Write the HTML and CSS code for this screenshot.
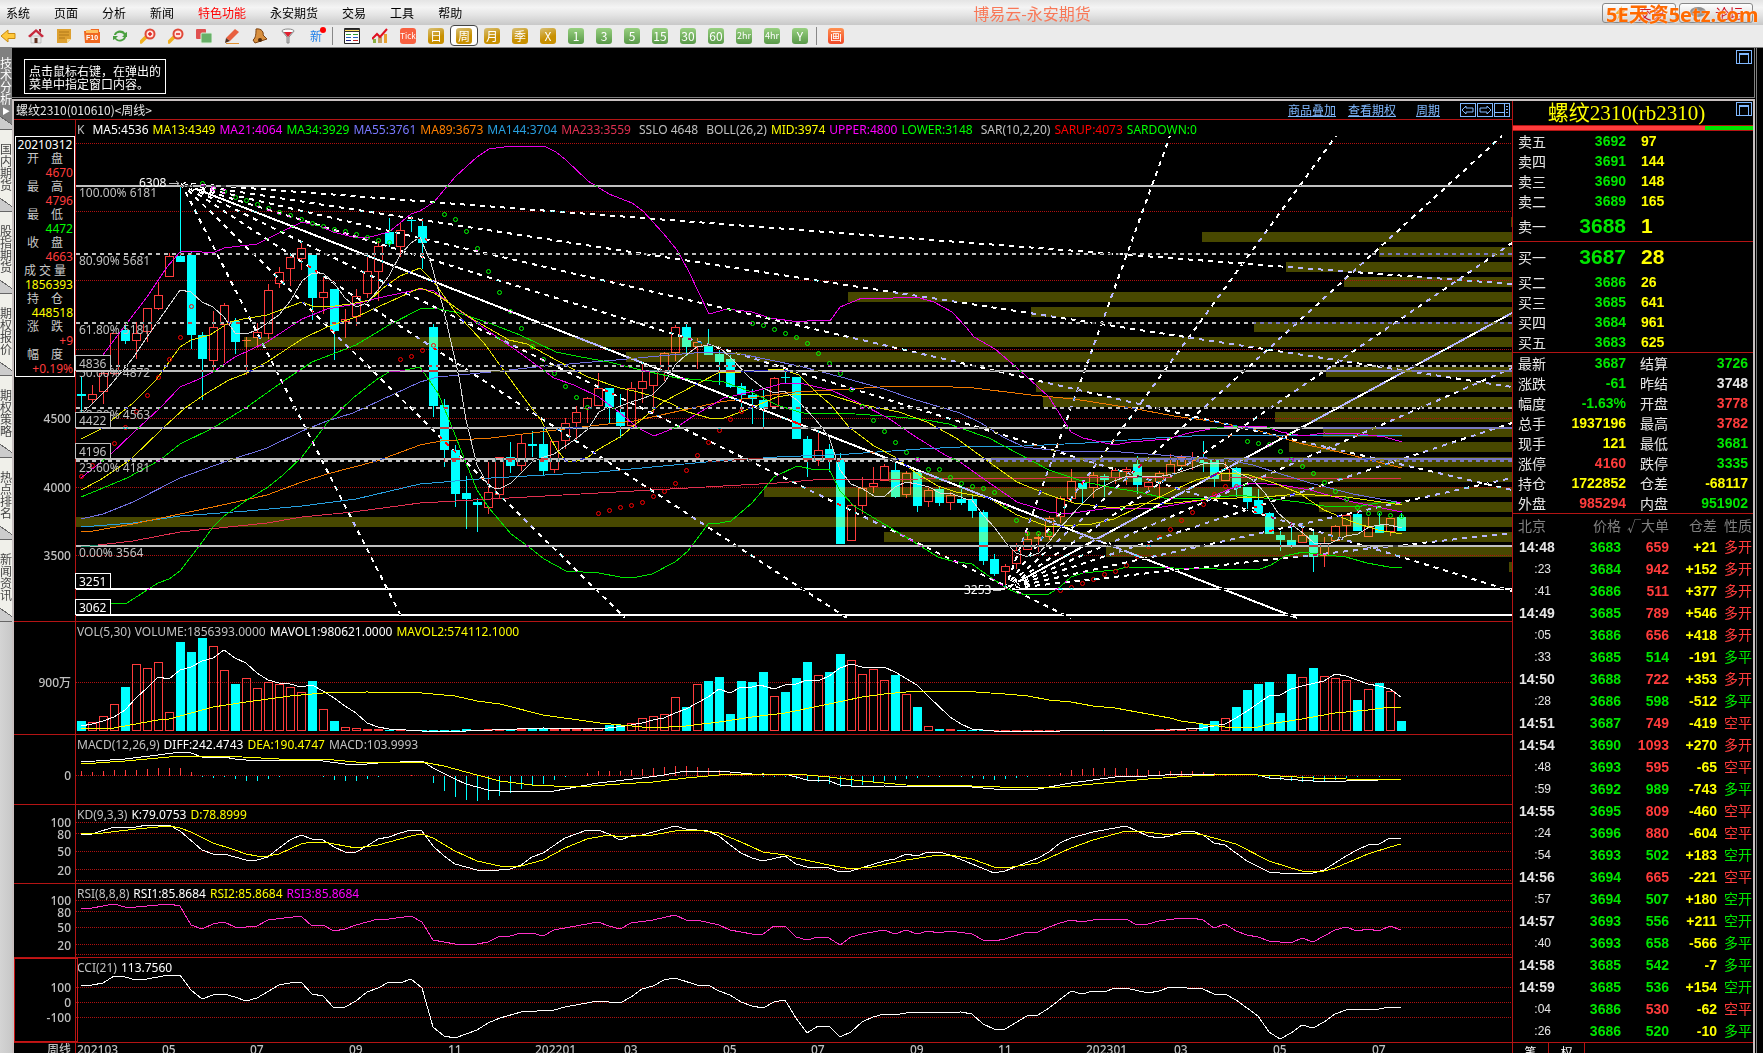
FILE: index.html
```html
<!DOCTYPE html>
<html lang="zh-CN">

<head>
    <meta charset="UTF-8">
    <meta name="viewport" content="width=device-width, initial-scale=1.0">
    <title>博易云-永安期货</title>
    <link rel="stylesheet" href="styles.css">
</head>

<body>
    <header class="menubar">
        <nav class="menu">
            <a href="#">系统</a>
            <a href="#">页面</a>
            <a href="#">分析</a>
            <a href="#">新闻</a>
            <a href="#" class="hot">特色功能</a>
            <a href="#">永安期货</a>
            <a href="#">交易</a>
            <a href="#">工具</a>
            <a href="#">帮助</a>
        </nav>
        <h1 class="app-title">博易云-永安期货</h1>
        <div class="account">
            <button class="pill"><svg width="16" height="16" viewBox="0 0 16 16"><path d="M10 1 3 9h4l-2 6 8-9H9z" fill="#f5a623"/></svg>交易</button>
            <button class="pill"><svg width="18" height="14" viewBox="0 0 18 14"><ellipse cx="9" cy="6" rx="8" ry="5" fill="#8f8f8f"/><path d="M5 9l-1 5 5-4z" fill="#8f8f8f"/></svg>论坛</button>
            <span class="watermark">5E天资5etz.com</span>
        </div>
    </header>

    <div class="toolbar">
        <button class="tool" aria-label="后退"><svg viewBox="0 0 16 16"><path d="M1 8l7-6v3.500h7v5H8V14z" fill="#ffc83c" stroke="#c98a10"/></svg></button>
        <button class="tool" aria-label="首页"><svg viewBox="0 0 16 16"><path d="M3 8h10v7H3z" fill="#e8e8e8" stroke="#999" stroke-width=".5"/><path d="M0 8l8-7 8 7-2 1.500L8 4 2 9.500z" fill="#c8283c"/><path d="M6.500 10h3v5h-3z" fill="#603020"/><path d="M11 1h2v4l-2-2z" fill="#a02030"/></svg></button>
        <button class="tool" aria-label="便签"><svg viewBox="0 0 16 16"><path d="M1 1h14v10l-4 4H1z" fill="#dda030"/><path d="M11 15v-4h4z" fill="#f5d890"/><path d="M3 4h10M3 7h10M3 10h6" stroke="#b07818"/></svg></button>
        <button class="tool" aria-label="F10资料"><svg viewBox="0 0 16 16"><path d="M0 3h6l1-2h8v3h1v11H1z" fill="#f06820"/><path d="M2 2h12v3H2z" fill="#ffc060"/><text x="8" y="12" text-anchor="middle" class="f10">F10</text></svg></button>
        <button class="tool" aria-label="刷新"><svg viewBox="0 0 16 16"><path d="M2 7c1-5 9-6 11-2l2-1v5h-5l2-2C10 4 5 4 4 7zM14 9c-1 5-9 6-11 2l-2 1V8h5l-2 2c2 3 7 2 8-1z" fill="#4aa040"/></svg></button>
        <button class="tool" aria-label="放大"><svg viewBox="0 0 16 16"><path d="M6 9l-5 5" stroke="#f0b020" stroke-width="3.500" stroke-linecap="round"/><circle cx="10" cy="6" r="4.500" fill="#ffe4e0" stroke="#e04838" stroke-width="2"/><path d="M8 6h4M10 4v4" stroke="#e02020" stroke-width="1.500"/></svg></button>
        <button class="tool" aria-label="缩小"><svg viewBox="0 0 16 16"><path d="M6 9l-5 5" stroke="#f0b020" stroke-width="3.500" stroke-linecap="round"/><circle cx="10" cy="6" r="4.500" fill="#ffe4e0" stroke="#e04838" stroke-width="2"/><path d="M8 6h4" stroke="#e02020" stroke-width="1.500"/></svg></button>
        <button class="tool" aria-label="叠加"><svg viewBox="0 0 16 16"><rect x="0" y="1" width="10" height="10" rx="1" fill="#e05050"/><rect x="5" y="5" width="11" height="10" rx="1" fill="#68b068" stroke="#d8f0d8"/></svg></button>
        <button class="tool" aria-label="画线"><svg viewBox="0 0 16 16"><path d="M2 10l9-9 4 3-9 9z" fill="#e86040"/><path d="M2 10l4 3-5 2z" fill="#503020"/><path d="M2 15.500h13" stroke="#e09030"/></svg></button>
        <button class="tool" aria-label="预警"><svg viewBox="0 0 16 16"><path d="M4 1c6-1 8 4 7 6l4 4-12 4-2-3c3-2 3-7 3-11z" fill="#d89040" stroke="#7a4010"/><circle cx="8" cy="12" r="2" fill="#502808"/></svg></button>
        <button class="tool" aria-label="筛选"><svg viewBox="0 0 16 16"><path d="M2 3l5 6v6h2V9l5-6z" fill="#c8c8c8" stroke="#888"/><ellipse cx="8" cy="3" rx="6" ry="2" fill="#fff" stroke="#888"/><path d="M4 4h8L8 9z" fill="#e02030"/></svg></button>
        <button class="tool tool-new">新</button>
        <i class="sep"></i>
        <button class="tool" aria-label="报价表"><svg viewBox="0 0 16 16"><path d="M.500.500h15v15H.500z" fill="#fff" stroke="#222"/><path d="M0 1h16v3H0z" fill="#333"/><path d="M1 2.500h14" stroke="#ffe060"/><path d="M2 6.500h5M9 6.500h5" stroke="#30a030"/><path d="M2 9.500h5M9 9.500h5" stroke="#2060c0"/><path d="M2 12.500h5" stroke="#202080"/><path d="M9 12.500h5" stroke="#c02020"/></svg></button>
        <button class="tool" aria-label="走势"><svg viewBox="0 0 16 16"><path d="M1 11h3v4H1z" fill="#8ab040"/><path d="M6 9h4v6H6z" fill="#c8a060"/><path d="M12 6h3v9h-3z" fill="#e8a030"/><path d="M0 11l5-5 3 3 7-8" fill="none" stroke="#e01020" stroke-width="2"/></svg></button>
        <button class="tool"><b class="chip tick">Tick</b></button>
        <button class="tool"><b class="chip gold">日</b></button>
        <button class="tool selected"><b class="chip gold">周</b></button>
        <button class="tool"><b class="chip gold">月</b></button>
        <button class="tool"><b class="chip gold">季</b></button>
        <button class="tool"><b class="chip gold">X</b></button>
        <button class="tool"><b class="chip green">1</b></button>
        <button class="tool"><b class="chip green">3</b></button>
        <button class="tool"><b class="chip green">5</b></button>
        <button class="tool"><b class="chip green">15</b></button>
        <button class="tool"><b class="chip green">30</b></button>
        <button class="tool"><b class="chip green">60</b></button>
        <button class="tool"><b class="chip green small">2hr</b></button>
        <button class="tool"><b class="chip green small">4hr</b></button>
        <button class="tool"><b class="chip green">Y</b></button>
        <i class="sep"></i>
        <button class="tool"><b class="chip orange">画</b></button>
    </div>

    <main class="workspace">
        <nav class="side-tabs">
            <a href="#" class="side-tab current">技术分析<span>▶</span></a>
            <a href="#" class="side-tab">国内期货</a>
            <a href="#" class="side-tab">股指期货</a>
            <a href="#" class="side-tab">期权报价</a>
            <a href="#" class="side-tab">期权策略</a>
            <a href="#" class="side-tab">热点排名</a>
            <a href="#" class="side-tab">新闻资讯</a>
        </nav>

        <div class="stage">
            <section class="top-pane">
                <p class="hint">点击鼠标右键，在弹出的<br>菜单中指定窗口内容。</p>
                <button class="win-btn" aria-label="最大化"></button>
            </section>

            <section class="pane">
                <div class="chart">
                    <div class="chart-title">
                        <h2>螺纹2310(010610)&lt;周线&gt;</h2>
                        <a href="#">商品叠加</a>
                        <a href="#">查看期权</a>
                        <a href="#" class="period">周期</a>
                        <div class="nav-btns">
                            <button aria-label="向左"><svg viewBox="0 0 14 12"><path d="M1 6l4-4v2h7v4H5v2z"/></svg></button>
                            <button aria-label="向右"><svg viewBox="0 0 14 12"><path d="M13 6L9 2v2H2v4h7v2z"/></svg></button>
                            <button aria-label="布局"><svg viewBox="0 0 14 12"><path d="M0 8.500h9M9.500 0v12M11 2.500h2M11 5.500h2M11 8.500h2"/></svg></button>
                        </div>
                    </div>

                    <div class="panel">
                        <div class="legend">
                            <span class="gap">K</span><span class="c-white">MA5:4536</span><span class="c-yellow">MA13:4349</span><span class="c-magenta">MA21:4064</span><span class="c-green">MA34:3929</span><span class="c-slate">MA55:3761</span><span class="c-orange">MA89:3673</span><span class="c-blue">MA144:3704</span><span class="c-crimson gap">MA233:3559</span><span class="gap">SSLO 4648</span><span>BOLL(26,2)</span><span class="c-yellow">MID:3974</span><span class="c-magenta">UPPER:4800</span><span class="c-green gap">LOWER:3148</span><span>SAR(10,2,20)</span><span class="c-red">SARUP:4073</span><span class="c-green">SARDOWN:0</span>
                        </div>
                        <svg id="price" viewBox="14 136 1498 485"></svg>
                        <dl class="info">
                            <dt class="c-white date">20210312</dt>
                            <dt>开　盘</dt><dd class="c-up">4670</dd>
                            <dt>最　高</dt><dd class="c-up">4796</dd>
                            <dt>最　低</dt><dd class="c-green">4472</dd>
                            <dt>收　盘</dt><dd class="c-up">4663</dd>
                            <dt>成 交 量</dt><dd class="c-yellow">1856393</dd>
                            <dt>持　仓</dt><dd class="c-yellow">448518</dd>
                            <dt>涨　跌</dt><dd class="c-up">+9</dd>
                            <dt>幅　度</dt><dd class="c-up">+0.19%</dd>
                        </dl>
                    </div>

                    <div class="panel">
                        <div class="legend"><span>VOL(5,30)</span><span>VOLUME:1856393.0000</span><span class="c-white">MAVOL1:980621.0000</span><span class="c-yellow">MAVOL2:574112.1000</span></div>
                        <svg id="vol" viewBox="14 638 1498 96"></svg>
                    </div>
                    <div class="panel">
                        <div class="legend"><span>MACD(12,26,9)</span><span class="c-white">DIFF:242.4743</span><span class="c-yellow">DEA:190.4747</span><span>MACD:103.9993</span></div>
                        <svg id="macd" viewBox="14 751 1498 53"></svg>
                    </div>
                    <div class="panel">
                        <div class="legend"><span>KD(9,3,3)</span><span class="c-white">K:79.0753</span><span class="c-yellow">D:78.8999</span></div>
                        <svg id="kd" viewBox="14 821 1498 62"></svg>
                    </div>
                    <div class="panel">
                        <div class="legend"><span>RSI(8,8,8)</span><span class="c-white">RSI1:85.8684</span><span class="c-yellow">RSI2:85.8684</span><span class="c-magenta">RSI3:85.8684</span></div>
                        <svg id="rsi" viewBox="14 900 1498 57"></svg>
                    </div>
                    <div class="panel active">
                        <div class="legend"><span>CCI(21)</span><span class="c-white">113.7560</span></div>
                        <svg id="cci" viewBox="14 974 1498 68"></svg>
                    </div>
                    <svg id="dates" viewBox="14 1043 1498 20"></svg>
                </div>

                <aside class="quote">
                    <div class="quote-title">
                        <h2>螺纹2310(rb2310)</h2>
                        <button class="win-btn" aria-label="最大化"></button>
                    </div>
                    <div class="ratio"><i class="sell"></i><i class="buy"></i></div>
                    <table class="book">
                        <tr><th>卖五</th><td class="c-dn">3692</td><td>97</td></tr>
                        <tr><th>卖四</th><td class="c-dn">3691</td><td>144</td></tr>
                        <tr><th>卖三</th><td class="c-dn">3690</td><td>148</td></tr>
                        <tr><th>卖二</th><td class="c-dn">3689</td><td>165</td></tr>
                        <tr class="best"><th>卖一</th><td class="c-dn">3688</td><td>1</td></tr>
                    </table>
                    <table class="book">
                        <tr class="best"><th>买一</th><td class="c-dn">3687</td><td>28</td></tr>
                        <tr><th>买二</th><td class="c-dn">3686</td><td>26</td></tr>
                        <tr><th>买三</th><td class="c-dn">3685</td><td>641</td></tr>
                        <tr><th>买四</th><td class="c-dn">3684</td><td>961</td></tr>
                        <tr><th>买五</th><td class="c-dn">3683</td><td>625</td></tr>
                    </table>
                    <table class="stats">
                        <tr><th>最新</th><td class="c-dn">3687</td><th>结算</th><td class="c-dn">3726</td></tr>
                        <tr><th>涨跌</th><td class="c-dn">-61</td><th>昨结</th><td class="c-flat">3748</td></tr>
                        <tr><th>幅度</th><td class="c-dn">-1.63%</td><th>开盘</th><td class="c-up">3778</td></tr>
                        <tr><th>总手</th><td class="c-yellow">1937196</td><th>最高</th><td class="c-up">3782</td></tr>
                        <tr><th>现手</th><td class="c-yellow">121</td><th>最低</th><td class="c-dn">3681</td></tr>
                        <tr><th>涨停</th><td class="c-up">4160</td><th>跌停</th><td class="c-dn">3335</td></tr>
                        <tr><th>持仓</th><td class="c-yellow">1722852</td><th>仓差</th><td class="c-yellow">-68117</td></tr>
                        <tr><th>外盘</th><td class="c-up">985294</td><th>内盘</th><td class="c-dn">951902</td></tr>
                    </table>
                    <table class="ticks">
                        <thead><tr><th>北京</th><th>价格</th><th>√大单</th><th>仓差</th><th>性质</th></tr></thead>
                        <tbody id="ticks"></tbody>
                    </table>
                    <div class="quote-tabs">
                        <button class="on">笔</button>
                        <button>权</button>
                    </div>
                </aside>
            </section>
        </div>
        <div class="gutter"></div>
    </main>

    <script src="script.js"></script>
</body>

</html>
```
FILE: styles.css
```css
* {
    box-sizing: border-box;
}

body {
    margin: 0;
    height: 100vh;
    overflow: hidden;
    display: flex;
    flex-direction: column;
    background: #000;
    color: #e6e6e6;
    font-family: "Noto Sans CJK SC", sans-serif;
    font-size: 12px;
}

h1, h2, p, dl, dd {
    margin: 0;
    font-weight: normal;
}

button {
    margin: 0;
    padding: 0;
    border: none;
    background: none;
    color: inherit;
    font: inherit;
    cursor: pointer;
}

a {
    color: inherit;
    text-decoration: none;
}

/* menu bar */
.menubar {
    display: flex;
    flex: none;
    align-items: center;
    height: 25px;
    background: linear-gradient(#e4e4e4, #f4f4f4 30%, #e4e4e4 60%, #c8c8c8);
    color: #000;
}

.menu {
    display: flex;
    gap: 24px;
    padding-left: 6px;
}

.menu .hot {
    color: #f00;
}

.app-title {
    flex: 1;
    text-align: center;
    font-size: 16px;
    line-height: 24px;
    color: #f87858;
}

.account {
    position: relative;
    display: flex;
    gap: 3px;
    padding-right: 10px;
}

.pill {
    display: flex;
    align-items: center;
    justify-content: space-evenly;
    width: 74px;
    height: 20px;
    border: 1px solid #888;
    border-radius: 3px;
    background: linear-gradient(#fff, #d0d0d0);
    color: #d01020;
    font-size: 14px;
    line-height: 16px;
}

.watermark {
    position: absolute;
    left: 4px;
    top: -1px;
    color: #ff6a00;
    font: bold 20px/26px "Noto Sans", "Noto Sans CJK SC", sans-serif;
    white-space: nowrap;
    text-shadow: 0 0 2px #fff;
}

/* toolbar */
.toolbar {
    display: flex;
    flex: none;
    align-items: center;
    height: 23px;
    padding-bottom: 1px;
    background: #ebebeb;
    border-bottom: 1px solid #808080;
}

.tool {
    display: flex;
    flex: none;
    align-items: center;
    justify-content: center;
    width: 28px;
    height: 21px;
}

.tool:first-child {
    margin-left: -6px;
}

.tool svg {
    width: 16px;
    height: 16px;
}

.tool .f10 {
    fill: #fff;
    font: bold 7px "Liberation Sans", sans-serif;
}

.tool.selected {
    border: 1px solid #444;
    border-radius: 4px;
    background: #fff;
}

.tool-new {
    position: relative;
    color: #2080e8;
}

.tool-new::after {
    content: "";
    position: absolute;
    right: 4px;
    top: 2px;
    width: 6px;
    height: 6px;
    border-radius: 50%;
    background: #f00;
}

.sep {
    width: 1px;
    height: 18px;
    margin: 0 5px 0 2px;
    background: #888;
}

.chip {
    width: 16px;
    height: 16px;
    border-radius: 3px;
    color: #fff;
    font: 12px/16px "Noto Sans CJK SC", sans-serif;
    text-align: center;
}

.chip.gold {
    background: linear-gradient(160deg, #d8c078, #c89000 60%);
}

.chip.green {
    background: linear-gradient(#98d080, #589848);
}

.chip.orange {
    background: linear-gradient(#ff9050, #f04828);
}

.chip.tick {
    background: #f86040;
    font-size: 8px;
}

.chip.small {
    font-size: 9px;
}

/* side tabs */
.workspace {
    display: flex;
    flex: 1;
    min-height: 0;
}

.side-tabs {
    flex: none;
    width: 12px;
    background: linear-gradient(90deg, #d4d4d4, #c8c8c8);
    overflow: hidden;
}

.side-tab {
    display: block;
    height: 82px;
    padding-top: 13px;
    border-bottom: 1px solid #666;
    background: linear-gradient(35deg, #ccc 10px, #666 10px, #666 11px, #f0f0ea 11px);
    color: #444;
    line-height: 12px;
    word-break: break-all;
}

.side-tab.current {
    background: linear-gradient(35deg, #ccc 10px, #666 10px, #666 11px, #808080 11px);
    color: #fff;
    padding-top: 9px;
}

.side-tab span {
    display: block;
    font-size: 8px;
    text-align: center;
}

/* panes */
.stage {
    display: flex;
    flex: 1;
    flex-direction: column;
    min-width: 0;
}

.gutter {
    flex: none;
    width: 7px;
    margin-left: 1px;
    border-left: 1px solid #808080;
}

.top-pane {
    display: flex;
    flex: none;
    justify-content: space-between;
    align-items: flex-start;
    height: 50px;
    margin-bottom: 1px;
    padding: 2px 2px 0 12px;
    border-right: 1px solid #808080;
    border-bottom: 1px solid #808080;
}

.hint {
    margin-top: 9px;
    padding: 4px 4px 3px;
    border: 1px solid #fff;
    color: #fff;
    line-height: 13px;
}

.win-btn {
    flex: none;
    width: 16px;
    height: 14px;
    padding: 2px;
    border: 1px solid #80b8ff;
}

.win-btn::before {
    content: "";
    display: block;
    height: 8px;
    border: 1px solid #80b8ff;
    border-top-width: 2px;
}

.pane {
    display: flex;
    flex: 1;
    min-height: 0;
    border: 2px solid #c8c0c0;
    border-bottom: none;
}

.chart {
    flex: 1;
    min-width: 0;
    overflow: hidden;
    border-right: 1px solid #b41414;
    font-family: "Noto Sans", "Noto Sans CJK SC", sans-serif;
}

.chart > svg,
.panel > svg {
    display: block;
    width: 100%;
    overflow: visible;
}

.chart-title {
    display: flex;
    align-items: center;
    gap: 12px;
    height: 19px;
    padding: 0 2px;
    border-bottom: 1px solid #b41414;
    font-family: "Noto Sans CJK SC", sans-serif;
    line-height: 16px;
}

.chart-title h2 {
    flex: 1;
    font-size: 12px;
}

.chart-title a {
    color: #80b8ff;
    text-decoration: underline;
}

.chart-title .period {
    margin: 0 8px;
}

.nav-btns {
    display: flex;
    gap: 1px;
}

.nav-btns button {
    width: 16px;
    height: 14px;
    border: 1px solid #80b8ff;
}

.nav-btns svg {
    display: block;
    fill: none;
    stroke: #80b8ff;
}

.panel {
    position: relative;
    border-bottom: 1px solid #b41414;
}

.panel.active::after {
    content: "";
    position: absolute;
    left: 0;
    top: 0;
    bottom: 0;
    width: 62px;
    border: 1px solid #c81414;
}

.legend {
    display: flex;
    gap: 4px;
    height: 16px;
    margin-left: 61px;
    padding: 3px 0 0 1px;
    border-left: 1px solid #b41414;
    color: #c0c0c0;
    line-height: 14px;
    white-space: nowrap;
}

.legend .gap {
    margin-right: 4px;
}

/* floating data window */
.info {
    position: absolute;
    left: 1px;
    top: 16px;
    width: 60px;
    padding: 1px 1px 0;
    border: 1px solid #fff;
    background: #000;
    line-height: 14px;
    color: #c8c8c8;
}

.info dt {
    text-align: center;
}

.info dd {
    text-align: right;
}

/* series colours */
.c-white { color: #fff; }
.c-yellow { color: #ff0; }
.c-magenta { color: #f0f; }
.c-green { color: #0f0; }
.c-slate { color: #7878ff; }
.c-orange { color: #ff8000; }
.c-blue { color: #28a0e0; }
.c-crimson { color: #e03050; }
.c-red { color: #f00; }
.c-up { color: #ff3c3c; }
.c-dn { color: #00e600; }
.c-flat { color: #e6e6e6; }

/* svg drawing */
.grid {
    stroke: #b01010;
    stroke-dasharray: 1 1;
}

.axis {
    stroke: #b41414;
}

.profile {
    fill: #484800;
}

.axis-text,
.level-text {
    fill: #c0c0c0;
    font-size: 12px;
}

.axis-text {
    font-weight: 500;
}

.level-text.bright {
    fill: #fff;
}

.level-box {
    fill: #000;
    stroke: #c0c0c0;
}

.level-box.bright {
    stroke: #fff;
}

.level {
    stroke: #c0c0c0;
    stroke-width: 2;
    mix-blend-mode: difference;
}

.level.dashed {
    stroke-dasharray: 4 4;
}

.level.bright {
    stroke: #fff;
}

.fan {
    stroke: #fff;
    stroke-width: 2;
    stroke-dasharray: 5 5;
    mix-blend-mode: difference;
}

.fan.solid {
    stroke-dasharray: none;
}

.candles {
    --up: #ff3c3c;
    --down: #0ff;
}

.candles.tinted {
    --up: #ff7832;
    --down: #48ffb7;
}

.bar-up {
    fill: none;
    stroke: var(--up);
}

.bar-down {
    fill: var(--down);
    stroke: var(--down);
}

.line {
    fill: none;
}

.sar {
    fill: none;
}

/* quote column */
.quote {
    flex: none;
    width: 240px;
    overflow: hidden;
    font-size: 14px;
}

.quote-title {
    display: flex;
    align-items: flex-start;
    height: 24px;
    padding: 1px 1px 0 4px;
}

.quote-title h2 {
    flex: 1;
    color: #ff0;
    font: 21px/22px "Liberation Serif", "Noto Sans CJK SC", serif;
    text-align: center;
}

.ratio {
    display: flex;
    height: 6px;
    border: 1px solid #b41414;
    border-width: 1px 0;
}

.sell {
    flex: 4;
    background: #ff3c3c;
}

.buy {
    flex: 1;
    background: #00e600;
}

.quote table {
    width: 100%;
    border-collapse: separate;
    border-spacing: 0;
    table-layout: fixed;
    border-bottom: 1px solid #b41414;
    line-height: 18px;
}

.quote th {
    padding: 0;
    font-weight: normal;
    text-align: left;
    white-space: nowrap;
}

.quote td {
    padding: 0;
    font-family: "Liberation Sans", "Noto Sans CJK SC", sans-serif;
    font-weight: bold;
    text-align: right;
}

.book tr,
.stats tr {
    height: 20px;
}

.book .best {
    height: 30px;
}

.book .best td {
    font-size: 21px;
}

.book th,
.stats th {
    width: 48px;
    padding-left: 5px;
}

.book td:nth-child(2),
.stats td:nth-child(2) {
    width: 65px;
}

.book td:last-child {
    padding-left: 15px;
    color: #ff0;
    text-align: left;
}

.stats th:nth-child(3) {
    padding-left: 14px;
}

.stats td:last-child {
    padding-right: 5px;
}

.ticks tr {
    height: 22px;
}

.ticks th {
    width: 48px;
    color: #808080;
    text-align: right;
}

.ticks th:first-child {
    padding-left: 5px;
    text-align: left;
}

.ticks th:nth-child(2) {
    width: 60px;
}

.ticks th:last-child {
    width: auto;
}

.ticks td:first-child {
    padding-left: 6px;
    color: #e6e6e6;
    text-align: left;
}

.ticks .sec td:first-child {
    padding: 0 10px 0 0;
    font-size: 12px;
    font-weight: normal;
    text-align: right;
}

.ticks td:nth-child(4) {
    color: #ff0;
}

.ticks td:last-child,
.ticks th:last-child {
    padding-right: 1px;
    font-weight: normal;
}

.quote-tabs {
    display: flex;
    font-size: 12px;
}

.quote-tabs button {
    width: 36px;
    height: 18px;
    line-height: 14px;
    border-right: 1px solid #b41414;
    color: #fff;
}
```
FILE: script.js
```js
const NS = 'http://www.w3.org/2000/svg';
const LEFT = 76;
const RIGHT = 1512;
const barX = i => 81 + i * 11;

function add(parent, tag, attrs, text) {
    const el = document.createElementNS(NS, tag);
    for (const key in attrs) el.setAttribute(key, attrs[key]);
    if (text !== undefined) el.textContent = text;
    parent.appendChild(el);
    return el;
}

function hline(svg, y, cls) {
    add(svg, 'line', { x1: LEFT, x2: RIGHT, y1: y, y2: y, class: cls, 'shape-rendering': 'crispEdges' });
}

function axis(svg, grids, labels) {
    const box = svg.viewBox.baseVal;
    grids.forEach(y => hline(svg, y + 0.5, 'grid'));
    add(svg, 'line', { x1: 75.5, x2: 75.5, y1: box.y, y2: box.y + box.height, class: 'axis', 'shape-rendering': 'crispEdges' });
    labels.forEach(([y, t]) => add(svg, 'text', { x: 71, y: y + 4, 'text-anchor': 'end', class: 'axis-text' }, t));
}

function line(svg, color, points) {
    add(svg, 'polyline', { points: points.trim(), stroke: color, class: 'line', 'shape-rendering': 'crispEdges' });
}

// ---------- price panel ----------
// [up, high, top, bottom, low]
const candles = [
    [0,376,394,396,412],[1,385,394,400,404],[1,372,373,392,404],[1,333,333,374,375],[0,324,330,341,344],[1,322,333,341,359],
    [1,308,308,332,342],[1,282,295,309,310],[1,253,256,277,277],[0,186,256,262,262],[0,252,255,335,349],[0,332,335,359,400],
    [1,311,327,361,371],[1,303,305,325,363],[0,318,321,342,354],[1,337,340,341,375],[1,323,332,338,348],[1,284,290,334,339],
    [1,267,272,284,288],[1,254,257,269,286],[1,241,248,259,270],[0,255,255,298,320],[1,276,292,298,314],[0,289,289,331,360],
    [1,309,319,322,338],[1,289,296,317,326],[1,255,271,294,298],[1,241,246,272,301],[0,218,232,244,247],[1,222,230,247,257],
    [0,216,220,221,232],[0,218,226,243,269],[0,324,327,406,417],[0,399,405,450,467],[0,445,450,494,507],[0,476,493,499,529],
    [0,498,502,505,532],[1,462,492,508,514],[1,457,457,495,498],[0,442,457,466,473],[1,435,443,466,471],[0,431,444,446,457],
    [0,429,444,471,476],[1,441,441,470,473],[1,418,423,441,449],[1,406,412,423,441],[1,397,398,409,423],[1,373,388,406,406],
    [0,388,388,407,424],[0,394,412,426,438],[1,382,388,426,427],[1,362,381,389,403],[1,370,370,386,413],[1,352,353,372,381],
    [1,325,327,353,361],[0,323,327,347,356],[1,338,342,347,369],[0,329,345,355,355],[0,350,354,362,385],[0,355,359,387,388],
    [0,383,386,395,412],[0,389,395,399,424],[0,390,400,408,429],[1,377,378,407,407],[0,368,377,378,383],[0,377,377,439,439],
    [0,436,439,460,477],[1,430,450,461,466],[0,444,449,460,472],[0,453,460,544,544],[1,503,505,541,541],[1,477,488,506,514],
    [1,467,483,487,493],[1,464,466,481,481],[0,463,470,497,498],[1,471,473,495,498],[0,472,472,506,512],[1,488,490,502,507],
    [0,487,489,503,506],[1,492,495,503,510],[0,489,499,503,505],[0,494,499,511,518],[0,510,512,561,565],[0,554,559,574,576],
    [1,564,566,572,589],[1,543,550,564,569],[1,532,539,550,550],[1,534,537,539,552],[1,516,518,537,540],[1,496,498,517,523],
    [1,469,481,499,502],[0,480,483,489,503],[1,472,475,488,498],[0,474,476,480,497],[1,468,470,478,484],[1,467,469,472,485],
    [0,456,464,485,494],[1,477,482,487,493],[1,471,473,482,499],[1,454,464,475,475],[1,455,457,466,472],[1,452,460,461,470],
    [0,441,459,463,472],[0,458,460,479,487],[1,462,469,481,481],[0,467,468,488,497],[0,487,487,502,509],[0,489,500,514,514],
    [0,512,513,534,534],[0,531,535,540,551],[0,522,540,545,548],[1,524,535,543,543],[0,531,535,557,572],[1,537,543,556,567],
    [1,525,526,541,541],[1,514,515,526,537],[0,510,514,531,531],[1,517,526,537,537],[0,513,525,533,533],[1,518,518,532,536],
    [0,513,517,531,531]
];

// volume-at-price rows: [y, left]
const profile = [
    [217,1511],[232,1202],[247,1379],[262,1286],[277,1344],[292,848],[307,1031],[322,1254],[337,244],[352,626],[367,1326],
    [382,1036],[397,1043],[412,1275],[427,1323],[442,1289],[457,991],[472,889],[487,764],[502,1319],[517,76],[532,884],[547,1106],[562,1509]
];

const price = document.getElementById('price');
add(price, 'rect', { x: 14, y: 136, width: 1498, height: 485, fill: '#000' });
const clip = add(add(price, 'defs', {}), 'clipPath', { id: 'profile-clip' });
profile.forEach(([y, x]) => {
    const r = { x: x, y: y, width: RIGHT - x, height: 10 };
    add(clip, 'rect', r);
    add(price, 'rect', Object.assign({ class: 'profile' }, r));
});
axis(price, [143, 211, 280, 349, 418, 487, 555], [[419, '4500'], [488, '4000'], [556, '3500']]);

function drawCandles(cls, clipPath) {
    const g = add(price, 'g', { class: cls, 'shape-rendering': 'crispEdges' });
    if (clipPath) g.setAttribute('clip-path', clipPath);
    candles.forEach(([up, high, top, bottom, low], i) => {
        const x = barX(i) + 0.5;
        const c = up ? 'bar-up' : 'bar-down';
        if (high < top) add(g, 'line', { x1: x, x2: x, y1: high, y2: top, class: c });
        if (low > bottom) add(g, 'line', { x1: x, x2: x, y1: bottom, y2: low, class: c });
        add(g, 'rect', { x: x - 4, y: top + 0.5, width: 8, height: Math.max(bottom - top - 1, 0.1), class: c });
    });
}
drawCandles('candles');
drawCandles('candles tinted', 'url(#profile-clip)');

// moving averages and bands
line(price, '#e03050', '81,547 133,541 180,532 267,523 302,517 353,512 420,503 527,497 670,489 777,483 813,480 920,479 1174,477 1228,477 1317,479 1402,478');
line(price, '#28a0e0', '81,527 133,523 180,516 247,511 302,506 356,499 420,484 491,478 599,472 706,462 777,457 849,454 920,449 980,446 1024,446 1085,443 1156,438 1210,435 1402,435');
line(price, '#f07800', '81,531 93,531 133,524 180,514 227,504 267,495 302,482 327,474 377,461 420,445 441,441 491,438 556,430 599,425 634,421 670,413 720,402 795,392 849,389 895,386 931,386 974,388 1031,395 1074,399 1131,408 1174,416 1210,421 1253,429 1299,443 1339,452 1374,461 1402,468');
line(price, '#7070e0', '81,519 103,514 133,502 180,478 227,461 267,448 302,431 327,421 353,413 420,382 438,377 491,372 545,366 616,360 670,355 706,352 741,354 799,366 841,377 884,389 913,399 960,413 981,423 1003,437 1024,447 1060,451 1121,452 1174,456 1224,459 1253,465 1281,474 1310,483 1353,494 1402,503');
line(price, '#00e600', '81,497 103,488 127,478 160,460 180,444 213,428 247,407 285,380 312,362 356,345 389,325 420,309 434,308 459,313 489,323 520,335 556,352 581,357 609,362 641,370 677,378 724,382 749,391 777,405 799,412 809,414 841,413 884,416 920,419 949,424 960,428 989,438 1017,453 1049,470 1085,482 1114,488 1139,492 1164,498 1210,498 1239,495 1264,498 1299,502 1324,506 1356,507 1378,503 1402,502');
line(price, '#00e600', '111,604 127,603 158,583 169,579 180,571 200,545 213,527 224,516 247,500 268,487 283,475 302,457 327,423 353,398 376,380 389,372 400,371 420,367 431,383 438,393 452,427 466,463 477,490 489,508 511,534 529,547 544,559 566,571 599,573 620,577 632,578 652,574 675,562 688,551 709,523 720,523 731,521 752,503 774,477 797,466 816,470 829,469 840,491 854,506 884,524 906,537 938,557 952,561 972,564 983,572 1006,588 1017,593 1028,595 1049,594 1060,587 1071,577 1083,573 1114,570 1128,567 1174,568 1217,569 1260,569 1271,565 1285,556 1303,552 1317,554 1346,557 1367,563 1389,567 1402,568');
line(price, '#e600e6', '103,355 127,323 147,297 167,267 180,252 191,251 213,253 224,248 257,244 279,233 302,222 320,226 333,232 353,237 370,237 389,232 411,214 420,211 434,202 455,177 477,157 489,149 511,146 544,146 556,152 566,160 588,181 609,194 632,203 643,211 663,233 677,250 688,270 709,314 727,309 752,312 770,318 799,322 816,320 830,321 840,307 862,298 884,299 902,297 920,298 934,302 952,312 966,327 974,337 995,349 1016,367 1049,397 1071,432 1083,438 1114,445 1131,442 1167,439 1189,433 1210,429 1231,426 1264,426 1281,432 1303,436 1324,433 1360,434 1385,437 1402,442');
line(price, '#e600e6', '81,478 110,455 133,433 160,408 180,387 197,380 213,372 235,357 267,342 302,319 327,309 356,304 378,298 420,289 434,291 456,308 484,328 520,353 554,378 574,385 599,397 620,413 638,428 654,436 677,427 695,415 724,398 759,390 784,383 799,383 831,390 863,405 888,418 916,437 945,455 960,462 981,477 1017,502 1049,512 1064,514 1103,509 1156,508 1203,500 1235,487 1253,483 1281,485 1310,490 1353,502 1402,512');
line(price, '#e6e600', '81,490 100,480 130,460 163,428 185,408 207,393 229,380 247,373 267,362 302,339 327,327 356,317 389,302 420,288 434,293 449,303 474,320 509,340 527,344 556,360 588,377 620,388 634,391 649,395 670,403 688,412 709,418 724,418 741,412 777,397 795,394 831,395 859,404 899,412 927,422 956,438 989,462 1017,482 1049,495 1074,503 1114,508 1139,504 1174,503 1210,499 1264,497 1299,494 1346,497 1402,505');
line(price, '#e6e600', '81,439 101,429 133,403 156,380 180,347 191,340 210,335 230,322 243,319 267,315 302,302 312,306 327,307 350,304 370,300 383,288 400,276 420,268 434,282 456,313 484,343 502,368 524,398 541,420 557,450 566,461 577,461 588,457 599,449 620,437 641,420 663,402 697,384 720,372 741,372 781,369 799,375 816,392 831,405 849,427 874,446 895,457 916,473 938,486 956,492 989,498 1017,515 1049,527 1064,526 1092,524 1114,519 1139,507 1174,490 1196,480 1224,473 1249,475 1274,483 1299,493 1324,510 1353,522 1378,530 1402,534');
line(price, '#d8d8d8', '85,411 108,388 133,358 147,337 180,290 191,292 202,302 213,307 224,317 235,333 246,334 257,330 279,315 291,300 302,281 312,273 323,273 334,283 345,298 356,307 367,303 378,290 389,276 400,255 411,243 420,237 431,263 443,307 459,377 466,420 477,465 489,487 499,489 511,483 534,460 554,454 577,438 588,429 599,412 609,407 618,407 631,402 641,399 652,395 665,382 675,365 686,355 697,347 709,345 719,347 731,358 749,377 763,388 774,393 784,391 797,400 816,420 829,437 840,470 851,484 863,489 874,496 884,497 895,487 906,482 917,484 929,487 940,493 950,493 966,499 972,500 983,515 995,528 1006,543 1016,553 1028,557 1039,553 1049,542 1060,528 1078,508 1096,490 1114,481 1128,476 1156,477 1174,474 1192,468 1206,463 1224,464 1239,473 1253,480 1265,493 1278,513 1292,525 1303,533 1314,543 1331,543 1346,536 1358,534 1369,527 1385,524 1402,528');

// SAR circles, each run starts at a bar index
const sar = [
    ['#f00', 0, [476, 465, 455, 443, 427, 411, 395, 377, 359, 337, 306]],
    ['#0f0', 11, [183, 188, 191, 197, 200, 204, 208, 212, 215, 219, 223, 226, 229, 231, 234, 237, 240, 242]],
    ['#f00', 29, [359, 356, 350, 345]],
    ['#0f0', 33, [214, 219, 231, 248, 271, 292, 311, 328, 346, 359, 373, 386, 397, 407]],
    ['#f00', 47, [513, 510, 507, 505, 502, 496, 491, 483, 470, 455, 442, 430, 419, 411]],
    ['#0f0', 61, [323, 325, 329, 333, 337, 343, 353, 363, 373, 389, 406, 420, 431, 442, 452, 459, 469, 469, 477, 483, 486, 488, 492, 506, 520, 533, 533, 533]],
    ['#f00', 89, [590, 587, 583, 579, 574, 571, 565, 556, 546, 537, 529, 520, 512, 504, 494, 486, 486]],
    ['#0f0', 106, [441, 443, 444, 451, 459, 466, 473, 482, 491, 499, 507, 513, 513, 515, 516]]
];
sar.forEach(([color, start, ys]) => ys.forEach((y, i) => {
    add(price, 'circle', { cx: barX(start + i) + 0.5, cy: y + 0.5, r: 2, stroke: color, class: 'sar' });
}));

// drawn levels
[186, 371, 428, 459, 546].forEach(y => hline(price, y, 'level'));
[254, 323, 366, 408, 461].forEach(y => hline(price, y, 'level dashed'));
[589, 615].forEach(y => hline(price, y, 'level bright'));

// speed-resistance fans
function fan(x, y, ends, solid) {
    ends.forEach(([ex, ey], i) => add(price, 'line', {
        x1: x, y1: y, x2: ex, y2: ey, 'shape-rendering': 'crispEdges', class: i === solid ? 'fan solid' : 'fan'
    }));
}
fan(181, 183, [[402, 618], [625, 618], [847, 618], [1071, 618], [1297, 618], [1512, 591], [1512, 490], [1512, 387], [1512, 284]], 4);
fan(1005, 589, [[1170, 136], [1336, 136], [1502, 136], [1512, 243], [1512, 313], [1512, 368], [1512, 423], [1512, 478], [1512, 533]], 4);

[[197, '100.00% 6181'], [265, '80.90% 5681'], [334, '61.80% 5181'], [377, '50.00% 4872'], [419, '38.20% 4563'], [472, '23.60% 4181'], [557, '0.00% 3564']]
    .forEach(([y, t]) => add(price, 'text', { x: 79, y: y, class: 'level-text' }, t));
[[355, '4836'], [412, '4422'], [443, '4196'], [573, '3251', 1], [599, '3062', 1]].forEach(([y, t, bright]) => {
    const b = bright ? ' bright' : '';
    add(price, 'rect', { x: 75.5, y: y + 0.5, width: 35, height: 15, class: 'level-box' + b });
    add(price, 'text', { x: 79, y: y + 13, class: 'level-text' + b }, t);
});
add(price, 'text', { x: 139, y: 187, class: 'level-text bright' }, '6308');
add(price, 'path', { d: 'M169 183.500h10M176 181l3 2.500-3 2.500', stroke: '#c0c0c0', fill: 'none' });
add(price, 'text', { x: 964, y: 594, class: 'level-text bright' }, '3253');
add(price, 'path', { d: 'M993 590.500h8', stroke: '#c0c0c0' });

// ---------- volume ----------
const vol = document.getElementById('vol');
axis(vol, [682], [[683, '900万']]);
// letter = colour (r hollow, c filled), number = bar top
const volumes = ('c721 r722 r716 r704 c687 r664 r668 r662 r712 c642 c652 c638 r646 r670 c684 r678 r688 r682 r684 r687 r692 c681 r709 c721 r727 r728 r729 r729 c730 r730 ' +
    'c730 c730 c730 c730 c730 c729 r730 r729 r729 c730 r729 c728 c728 r729 r729 r729 r729 r728 c725 c725 r723 r718 r716 r714 r697 c707 r684 c681 c677 c714 ' +
    'c681 c682 c672 r696 c692 c678 c662 r675 c672 c654 r660 r674 r669 r680 c675 r694 c707 r726 c729 r729 c730 c730 c730 r730 r730 r730 r730 r730 r730 r730 ' +
    'r730 c730 c730 c730 c730 c730 c730 r730 r729 r729 r729 r728 c724 c721 r718 c707 c690 c684 c682 c713 c674 r677 c668 r676 r678 r680 c700 r689 c683 r691 c721').split(' ');
const volBars = add(vol, 'g', { class: 'candles', 'shape-rendering': 'crispEdges' });
volumes.forEach((v, i) => {
    const top = Number(v.slice(1));
    add(volBars, 'rect', { x: barX(i) - 3.5, y: top + 0.5, width: 8, height: Math.max(730 - top, 0.1), class: v[0] === 'r' ? 'bar-up' : 'bar-down' });
});
line(vol, '#fff', '81,726 92,724 103,721 114,717 125,710 136,698 147,688 158,677 169,679 180,670 191,667 202,661 213,658 224,650 235,658 246,663 257,673 268,680 279,683 290,684 301,687 312,685 323,691 334,698 345,706 356,713 367,723 378,727 389,729 422,731 466,731 543,728 600,729 625,726 642,723 653,720 664,718 675,713 686,709 697,703 708,697 719,689 730,693 741,687 752,687 760,685 774,689 785,685 796,684 807,680 818,681 829,676 840,668 851,664 862,667 884,667 895,672 917,685 928,696 950,717 961,724 972,729 994,731 1060,731 1104,730 1170,730 1203,728 1225,724 1236,718 1247,711 1269,696 1280,695 1291,689 1302,686 1324,681 1335,674 1346,676 1368,684 1379,686 1390,689 1401,697');
line(vol, '#ff0', '81,729 114,728 158,720 169,719 191,713 213,707 246,702 290,696 323,693 367,692 422,693 455,696 477,701 500,704 543,715 600,723 653,728 686,726 719,722 752,717 785,713 829,704 862,697 884,694 917,691 961,691 1005,694 1028,696 1049,700 1071,702 1093,706 1115,708 1137,712 1170,718 1181,721 1203,724 1225,727 1236,728 1258,727 1269,724 1302,719 1335,713 1368,710 1390,707 1401,707');

// ---------- MACD ----------
const macd = document.getElementById('macd');
axis(macd, [775], [[776, '0']]);
const histogram = [
    5,4,5,6,6,6,7,8,8,8,4,-1,-2,-1,-3,-5,-5,-3,-1,0,0,0,-1,-4,-5,-5,-3,-1,0,0,1,0,-7,-15,-21,-24,-25,-24,-20,-17,
    -13,-10,-8,-4,-1,0,3,5,5,5,6,7,8,9,10,10,9,8,6,4,2,1,-1,-1,-1,-3,-5,-6,-8,-11,-11,-9,-7,-5,-4,-3,-2,-1,-1,0,
    -1,-2,-3,-4,-3,-2,-1,0,1,3,6,7,8,8,8,8,7,6,5,5,5,5,4,3,2,1,0,-1,-3,-4,-5,-6,-6,-5,-4,-2,-1,0,-1,0,0
];
histogram.forEach((h, i) => {
    if (!h) return;
    const x = barX(i) + 0.5;
    add(macd, 'line', { x1: x, x2: x, y1: 775.5, y2: 775.5 - h, stroke: h > 0 ? '#ff3c3c' : '#0ff', 'shape-rendering': 'crispEdges' });
});
line(macd, '#fff', '81,762 125,759 158,755 180,752 191,753 202,757 224,757 235,759 257,761 279,760 301,760 323,761 345,764 356,765 378,763 422,761 433,768 455,779 466,784 488,790 500,791 554,791 598,783 642,778 664,775 686,771 719,771 752,774 785,774 807,780 829,781 840,785 862,787 884,786 972,787 994,789 1038,789 1071,783 1093,780 1115,777 1148,776 1182,774 1245,774 1258,775 1269,778 1313,781 1346,781 1379,780 1401,779');
line(macd, '#ff0', '81,764 125,761 180,756 224,756 279,759 323,759 356,762 422,762 444,766 477,775 500,781 532,785 576,787 620,784 653,782 686,778 719,775 763,774 807,775 829,777 862,781 906,785 972,786 1028,788 1060,787 1104,783 1148,779 1192,776 1236,774 1280,776 1313,778 1346,779 1401,780');

// ---------- KD ----------
const kd = document.getElementById('kd');
axis(kd, [822, 833, 851, 869, 880], [[823, '100'], [835, '80'], [852, '50'], [871, '20']]);
line(kd, '#fff', '81,834 92,834 114,827 136,827 147,825 169,825 180,831 202,850 213,854 224,854 246,860 257,860 268,857 279,848 290,840 301,835 312,839 323,840 334,847 345,852 356,852 367,846 378,839 389,837 400,833 411,830 422,831 433,846 444,856 455,864 466,867 477,870 488,871 510,869 521,865 532,857 543,853 565,838 587,830 598,830 609,834 620,840 631,836 642,835 653,832 675,826 686,829 708,831 719,836 730,845 741,853 752,858 763,861 785,856 796,864 807,867 829,868 840,872 851,871 884,861 895,859 906,854 917,856 928,852 939,852 950,855 994,873 1005,871 1038,858 1049,852 1060,843 1071,838 1093,832 1126,826 1137,831 1148,836 1159,838 1170,836 1181,832 1192,831 1203,835 1214,843 1225,845 1247,861 1269,872 1291,874 1313,873 1324,870 1335,863 1346,856 1357,850 1368,845 1379,844 1390,838 1401,839');
line(kd, '#ff0', '81,834 103,833 136,829 169,826 180,828 191,832 213,843 235,850 246,854 257,856 268,856 279,854 301,844 312,842 323,842 356,848 378,845 411,836 422,834 433,838 455,851 477,861 500,866 510,867 521,866 543,860 565,848 587,839 609,835 620,837 653,835 675,831 697,830 719,833 741,842 763,852 785,855 796,858 829,865 851,869 872,867 906,860 939,855 950,855 972,859 994,867 1005,868 1038,863 1071,848 1093,840 1126,831 1137,831 1170,835 1192,833 1203,835 1236,844 1269,861 1291,868 1302,871 1324,871 1335,868 1368,854 1390,847 1401,844');

// ---------- RSI ----------
const rsi = document.getElementById('rsi');
axis(rsi, [900, 911, 927, 944, 954], [[901, '100'], [913, '80'], [928, '50'], [946, '20']]);
line(rsi, '#ff30c8', '81,908 92,908 114,904 125,907 136,907 169,904 180,906 191,925 202,929 213,924 224,922 235,927 246,927 257,926 268,920 301,916 312,926 323,925 334,931 345,929 356,925 378,919 389,919 411,916 422,922 433,940 455,944 477,944 488,942 500,936 510,936 521,933 532,933 543,936 554,930 598,922 609,926 620,929 631,923 653,920 675,915 686,920 697,920 719,925 730,930 752,934 763,934 774,926 785,926 796,937 807,940 818,937 829,938 840,945 851,937 862,934 884,930 895,934 906,930 917,934 928,931 939,933 950,931 972,934 983,940 994,941 1005,939 1027,932 1038,932 1049,927 1060,923 1071,920 1082,922 1093,920 1115,919 1126,919 1137,925 1148,924 1159,921 1181,918 1192,918 1203,920 1214,928 1225,924 1236,931 1247,935 1258,937 1269,941 1291,943 1302,938 1313,942 1335,930 1346,927 1357,931 1368,929 1379,931 1390,926 1401,930');

// ---------- CCI ----------
const cci = document.getElementById('cci');
axis(cci, [987, 1002, 1017], [[988, '100'], [1003, '0'], [1018, '-100']]);
line(cci, '#fff', '81,985 92,985 103,983 114,976 125,977 136,980 147,979 169,975 180,975 191,990 202,999 213,995 224,994 235,997 246,1001 257,998 279,985 290,983 301,982 312,994 323,996 334,1008 345,1007 356,1001 367,992 378,988 389,982 400,983 411,979 422,988 433,1027 444,1036 455,1038 477,1030 488,1023 500,1018 521,1012 554,1010 565,1007 598,1001 620,1003 631,997 642,989 653,986 664,980 675,978 697,985 708,985 719,991 730,995 741,1002 752,1006 763,1008 774,1002 785,1000 796,1018 807,1033 818,1026 829,1026 840,1037 851,1032 862,1022 873,1017 884,1014 895,1015 906,1013 961,1012 972,1014 983,1024 994,1029 1005,1029 1027,1016 1038,1015 1049,1008 1071,991 1082,994 1093,991 1104,992 1115,988 1126,988 1148,993 1159,991 1170,987 1203,989 1214,994 1225,994 1236,1000 1258,1016 1269,1032 1280,1039 1291,1033 1302,1025 1313,1028 1324,1022 1335,1014 1346,1010 1379,1009 1390,1007 1401,1008');

// ---------- date axis ----------
const dates = document.getElementById('dates');
axis(dates, [], [[1050, '周线']]);
[[77, '202103'], [162, '05'], [250, '07'], [349, '09'], [448, '11'], [535, '202201'], [624, '03'], [723, '05'], [811, '07'],
    [910, '09'], [998, '11'], [1086, '202301'], [1174, '03'], [1273, '05'], [1372, '07']]
    .forEach(([x, t]) => add(dates, 'text', { x: x, y: 1054, class: 'axis-text' }, t));

// ---------- tick list: time, price, lots, open interest change, type ----------
const ticks = `14:48 3683 659 +21 多开
:23 3684 942 +152 多开
:41 3686 511 +377 多开
14:49 3685 789 +546 多开
:05 3686 656 +418 多开
:33 3685 514 -191 多平
14:50 3688 722 +353 多开
:28 3686 598 -512 多平
14:51 3687 749 -419 空平
14:54 3690 1093 +270 多开
:48 3693 595 -65 空平
:59 3692 989 -743 多平
14:55 3695 809 -460 空平
:24 3696 880 -604 空平
:54 3693 502 +183 空开
14:56 3694 665 -221 空平
:57 3694 507 +180 空开
14:57 3693 556 +211 空开
:40 3693 658 -566 多平
14:58 3685 542 -7 多平
14:59 3685 536 +154 空开
:04 3686 530 -62 空平
:26 3686 520 -10 多平`;

const tbody = document.getElementById('ticks');
ticks.split('\n').forEach(row => {
    const cells = row.split(' ');
    const side = cells[4] === '多开' || cells[4] === '空平' ? 'c-up' : 'c-dn';
    const colors = ['', 'c-dn', side, '', side];
    const tr = document.createElement('tr');
    if (cells[0][0] === ':') tr.className = 'sec';
    cells.forEach((text, i) => {
        const td = document.createElement('td');
        td.textContent = text;
        if (colors[i]) td.className = colors[i];
        tr.appendChild(td);
    });
    tbody.appendChild(tr);
});
```
